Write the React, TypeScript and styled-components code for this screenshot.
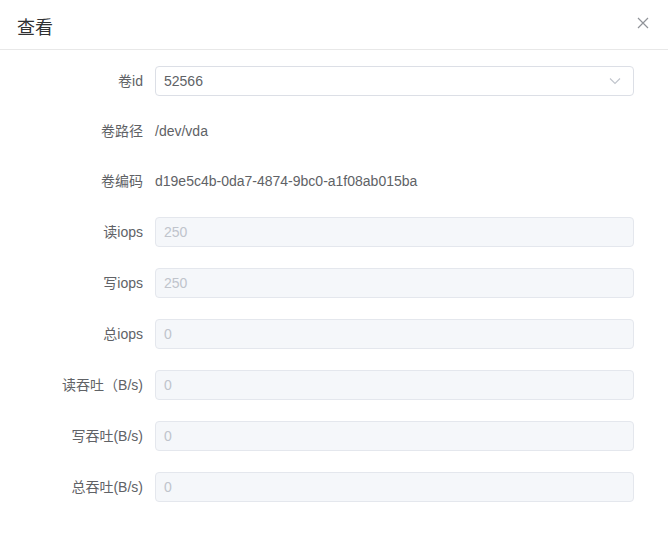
import React from "react";
import styled, { createGlobalStyle } from "styled-components";

const Global = createGlobalStyle`
  html, body { margin: 0; padding: 0; background: #fff; }
  body {
    font-family: "Liberation Sans", Arial, "Noto Sans CJK SC", sans-serif;
    -webkit-font-smoothing: antialiased;
  }
  * { box-sizing: border-box; }
`;

const Dialog = styled.div`
  width: 668px;
  height: 545px;
  background: #fff;
  display: flex;
  flex-direction: column;
`;

const Header = styled.div`
  height: 50px;
  padding: 3px 17px 0 17px;
  display: flex;
  align-items: center;
  justify-content: space-between;
  border-bottom: 1px solid #e8e8e8;
`;

const Title = styled.span`
  font-size: 18px;
  line-height: 24px;
  color: #303133;
  font-family: "Noto Sans CJK SC", sans-serif;
`;

const Close = styled.button`
  border: 0;
  background: none;
  padding: 0;
  width: 14px;
  height: 14px;
  margin-top: -7px;
  margin-right: 1px;
  display: flex;
  align-items: center;
  justify-content: center;
  cursor: pointer;
`;

const Form = styled.div`
  padding: 16px 34px 0 0;
  display: grid;
  grid-template-columns: 143px 479px;
  column-gap: 12px;
  row-gap: 21px;
`;

const Label = styled.div<{ $h: number }>`
  height: ${(p) => p.$h}px;
  line-height: ${(p) => p.$h}px;
  text-align: right;
  font-size: 14px;
  color: #606266;
  white-space: nowrap;
`;

const Text = styled.div`
  height: 29px;
  line-height: 29px;
  font-size: 14px;
  color: #606266;
`;

const Select = styled.div`
  height: 30px;
  border: 1px solid #dcdfe6;
  border-radius: 4px;
  display: flex;
  align-items: center;
  justify-content: space-between;
  padding: 0 12px 0 8px;
  font-size: 14px;
  color: #606266;
`;

const Input = styled.div`
  height: 30px;
  border: 1px solid #e4e7ed;
  background: #f5f7fa;
  border-radius: 4px;
  display: flex;
  align-items: center;
  padding: 0 8px;
  font-size: 14px;
  color: #c0c4cc;
`;

const Chevron = () => (
  <svg width="12" height="8" viewBox="0 0 12 8" fill="none">
    <path d="M1 1.5 L6 6.5 L11 1.5" stroke="#c0c4cc" strokeWidth="1.1" />
  </svg>
);

const fields = [
  { label: "读iops", value: "250" },
  { label: "写iops", value: "250" },
  { label: "总iops", value: "0" },
  { label: "读吞吐（B/s)", value: "0" },
  { label: "写吞吐(B/s)", value: "0" },
  { label: "总吞吐(B/s)", value: "0" },
];

export default function App() {
  return (
    <>
      <Global />
      <Dialog>
        <Header>
          <Title>查看</Title>
          <Close aria-label="close">
            <svg width="12" height="12" viewBox="0 0 12 12">
              <path d="M1 1 L11 11 M11 1 L1 11" stroke="#909399" strokeWidth="1.2" />
            </svg>
          </Close>
        </Header>
        <Form>
          <Label $h={30}>卷id</Label>
          <Select>
            <span>52566</span>
            <Chevron />
          </Select>
          <Label $h={29}>卷路径</Label>
          <Text>/dev/vda</Text>
          <Label $h={29}>卷编码</Label>
          <Text>d19e5c4b-0da7-4874-9bc0-a1f08ab015ba</Text>
          {fields.map((f) => (
            <React.Fragment key={f.label}>
              <Label $h={30}>{f.label}</Label>
              <Input>{f.value}</Input>
            </React.Fragment>
          ))}
        </Form>
      </Dialog>
    </>
  );
}
